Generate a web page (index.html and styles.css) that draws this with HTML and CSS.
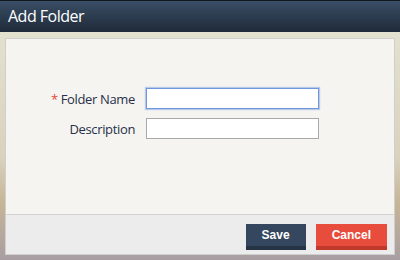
FILE: index.html
```html
<!DOCTYPE html>
<html lang="en">
<head>
  <meta charset="UTF-8">
  <title>Add Folder</title>
  <link rel="stylesheet" href="styles.css">
</head>
<body>

<div class="dialog">
  <div class="dialog-header">Add Folder</div>
  <div class="dialog-frame">
    <div class="panel">
      <div class="panel-body">
        <form class="folder-form">
          <label class="field-label" for="folder-name"><span class="required">*</span> Folder Name</label>
          <input class="field-input focused" type="text" id="folder-name">
          <label class="field-label" for="folder-desc">Description</label>
          <input class="field-input" type="text" id="folder-desc">
        </form>
      </div>
      <div class="panel-footer">
        <button class="btn btn-save" type="button">Save</button>
        <button class="btn btn-cancel" type="button">Cancel</button>
      </div>
    </div>
  </div>
</div>

</body>
</html>
```

FILE: styles.css
```css
body {
  margin: 0;
  padding: 0;
  font-family: 'Open Sans', sans-serif;
}
.dialog {
  width: 400px;
  height: 260px;
  display: flex;
  flex-direction: column;
}
.dialog-header {
  height: 31px;
  border-top: 1px solid #101820;
  background: linear-gradient(#3a4e66, #1e2a38);
  color: #fff;
  font-size: 16px;
  letter-spacing: -0.5px;
  line-height: 31px;
  padding-left: 8px;
}
.dialog-frame {
  flex: 1;
  padding: 6px 5px 5px 5px;
  background: linear-gradient(#e3e1cf 0%, #d9d2bd 55%, #c6b596 75%, #a89ea2 100%);
  display: flex;
}
.panel {
  flex: 1;
  border: 1px solid #cfcfcf;
  display: flex;
  flex-direction: column;
}
.panel-body {
  flex: 1;
  background-color: #f5f4f0;
}
.folder-form {
  display: grid;
  grid-template-columns: 129px 173px;
  column-gap: 11px;
  row-gap: 9px;
  padding-top: 49px;
  align-items: center;
}
.field-label {
  text-align: right;
  font-size: 13px;
  letter-spacing: -0.35px;
  color: #27304a;
}
.required {
  color: #e2463a;
}
.field-input {
  box-sizing: border-box;
  height: 21px;
  margin: 0;
  border: 1px solid #a9a9a9;
  background: #fff;
  outline: none;
}
.field-input.focused {
  border-color: #7097dd;
  box-shadow: 0 0 1px 1px rgba(112, 151, 221, 0.45);
}
.panel-footer {
  height: 40px;
  border-top: 1px solid #d2d2d2;
  background-color: #ececec;
  display: flex;
  justify-content: flex-end;
  align-items: flex-start;
  gap: 10px;
  padding: 9px 7px 0 0;
  box-sizing: border-box;
}
.btn {
  height: 26px;
  padding: 0 16px;
  border: none;
  border-bottom: 4px solid;
  font-family: 'Liberation Sans', Arial, sans-serif;
  font-weight: bold;
  font-size: 12px;
  color: #fff;
  cursor: pointer;
}
.btn-save {
  background-color: #34475e;
  border-bottom-color: #253345;
}
.btn-cancel {
  background-color: #e74c3c;
  border-bottom-color: #c0392b;
}
```
